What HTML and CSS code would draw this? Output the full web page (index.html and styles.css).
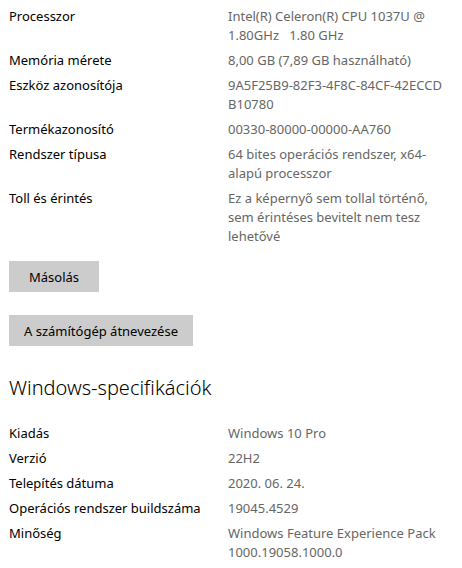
FILE: index.html
```html
<!DOCTYPE html>
<html lang="hu">
<head>
<meta charset="utf-8">
<title>Névjegy</title>
<link rel="stylesheet" href="styles.css">
</head>
<body>
<div class="page">
  <dl class="specs">
    <div class="row"><dt>Processzor</dt><dd>Intel(R) Celeron(R) CPU 1037U @<br>1.80GHz&nbsp;&nbsp; 1.80 GHz</dd></div>
    <div class="row"><dt>Memória mérete</dt><dd>8,00 GB (7,89 GB használható)</dd></div>
    <div class="row"><dt>Eszköz azonosítója</dt><dd>9A5F25B9-82F3-4F8C-84CF-42ECCD<br>B10780</dd></div>
    <div class="row"><dt>Termékazonosító</dt><dd>00330-80000-00000-AA760</dd></div>
    <div class="row"><dt>Rendszer típusa</dt><dd>64 bites operációs rendszer, x64-<br>alapú processzor</dd></div>
    <div class="row"><dt>Toll és érintés</dt><dd>Ez a képernyő sem tollal történő,<br>sem érintéses bevitelt nem tesz<br>lehetővé</dd></div>
  </dl>

  <div class="actions">
    <button class="btn btn-copy">Másolás</button>
    <button class="btn btn-rename">A számítógép átnevezése</button>
  </div>

  <h2 class="section-title">Windows-specifikációk</h2>

  <dl class="specs">
    <div class="row"><dt>Kiadás</dt><dd>Windows 10 Pro</dd></div>
    <div class="row"><dt>Verzió</dt><dd>22H2</dd></div>
    <div class="row"><dt>Telepítés dátuma</dt><dd>2020. 06. 24.</dd></div>
    <div class="row"><dt>Operációs rendszer buildszáma</dt><dd>19045.4529</dd></div>
    <div class="row"><dt>Minőség</dt><dd>Windows Feature Experience Pack<br>1000.19058.1000.0</dd></div>
  </dl>
</div>
</body>
</html>
```

FILE: styles.css
```css
html, body {
  margin: 0;
  padding: 0;
  background: #ffffff;
}

body {
  font-family: "Noto Sans", "Open Sans", sans-serif;
  font-size: 13px;
  color: #000000;
}

.page {
  padding: 7px 9px 0 9px;
}

.specs {
  margin: 0;
  display: flex;
  flex-direction: column;
  gap: 6px;
}

.row {
  display: grid;
  grid-template-columns: 219px 1fr;
  line-height: 19px;
}

.row dt {
  margin: 0;
  color: #000000;
}

.row dd {
  margin: 0;
  color: #666666;
}

.actions {
  display: flex;
  flex-direction: column;
  align-items: flex-start;
  gap: 23px;
  margin-top: 15px;
}

.btn {
  font-family: inherit;
  font-size: 13px;
  color: #000000;
  background: #cccccc;
  border: none;
  height: 31px;
  padding: 0 15px;
  min-width: 90px;
}

.section-title {
  margin: 28px 0 22px 0;
  font-size: 20px;
  font-weight: 300;
  line-height: 28px;
  color: #000000;
}
```
